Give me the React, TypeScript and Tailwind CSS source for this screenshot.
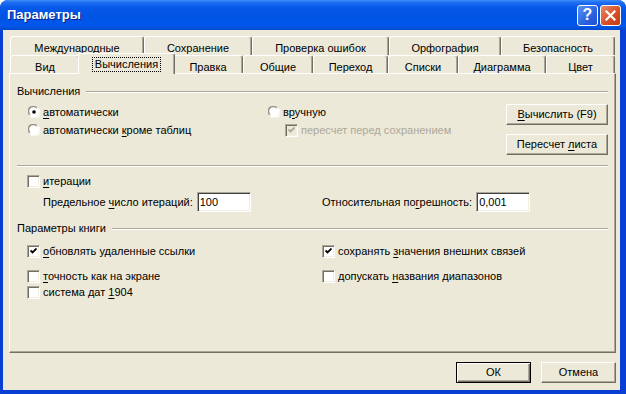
import React from "react";

const face = "bg-[#ECE9D8]";

const Check = ({ checked = false, disabled = false }: { checked?: boolean; disabled?: boolean }) => (
	<div
		className={`flex h-[13px] w-[13px] shrink-0 items-center justify-center border border-t-[#ACA899] border-l-[#ACA899] border-r-white border-b-white shadow-[inset_1px_1px_0_#716F64,inset_-1px_-1px_0_#F1EFE2] ${
			disabled ? face : "bg-white"
		}`}
	>
		{checked && (
			<svg width="7" height="7" viewBox="0 0 7 7">
				<path d="M0.5 2.5 L2.5 4.5 L6.5 0.5" fill="none" stroke={disabled ? "#ACA899" : "#000"} strokeWidth="1.8" />
			</svg>
		)}
	</div>
);

const Radio = ({ checked = false }: { checked?: boolean }) => (
	<svg width="12" height="12" viewBox="0 0 12 12" className="shrink-0">
		<circle cx="6" cy="6" r="5.5" fill="#fff" />
		<path d="M1.2 9.2 A5.5 5.5 0 0 1 9.2 1.2" fill="none" stroke="#ACA899" strokeWidth="1" />
		<path d="M2 8.6 A4.5 4.5 0 0 1 8.6 2" fill="none" stroke="#716F64" strokeWidth="1" />
		<path d="M10.8 2.8 A5.5 5.5 0 0 1 2.8 10.8" fill="none" stroke="#fff" strokeWidth="1" />
		{checked && <circle cx="6" cy="6" r="1.8" fill="#000" />}
	</svg>
);

const GroupHeader = ({ label }: { label: string }) => (
	<div className="flex h-[13px] items-center">
		<span className="leading-[13px]">{label}</span>
		<div className="ml-[6px] flex-1 border-t border-t-[#ACA899] border-b border-b-white" />
	</div>
);

const Btn = ({ children, def = false, className = "" }: { children: React.ReactNode; def?: boolean; className?: string }) => (
	<button
		className={`flex h-[21px] items-center justify-center ${face} ${
			def
				? "border border-black shadow-[inset_1px_1px_0_#fff,inset_-1px_-1px_0_#716F64,inset_-2px_-2px_0_#ACA899]"
				: "border border-t-white border-l-white border-r-[#716F64] border-b-[#716F64] shadow-[inset_-1px_-1px_0_#ACA899]"
		} ${className}`}
	>
		<span>{children}</span>
	</button>
);

const Field = ({ value }: { value: string }) => (
	<div className="flex h-[20px] w-[54px] items-center border border-t-[#ACA899] border-l-[#ACA899] border-r-white border-b-white bg-white pl-[2px] shadow-[inset_1px_1px_0_#404040,inset_-1px_-1px_0_#F1EFE2]">
		{value}
	</div>
);

const U = ({ children }: { children: React.ReactNode }) => <span className="underline underline-offset-[2px]">{children}</span>;

const row1 = [
	{ label: "Международные", w: "w-[134px]" },
	{ label: "Сохранение", w: "w-[108px]" },
	{ label: "Проверка ошибок", w: "w-[137px]" },
	{ label: "Орфография", w: "w-[112px]" },
	{ label: "Безопасность", w: "w-[114px]" },
];

const row2 = [
	{ label: "Вид", w: "w-[70px]" },
	{ label: "Вычисления", w: "w-[97px]", active: true },
	{ label: "Правка", w: "w-[70px]" },
	{ label: "Общие", w: "w-[70px]" },
	{ label: "Переход", w: "w-[75px]" },
	{ label: "Списки", w: "w-[70px]" },
	{ label: "Диаграмма", w: "w-[88px]" },
	{ label: "Цвет", w: "w-[69px]" },
];

const tabBase =
	"flex justify-center border-t border-l border-t-white border-l-white border-r border-r-[#716F64] rounded-t-[3px] shadow-[inset_-1px_0_0_#ACA899]";

export default function App() {
	return (
		<div className="flex h-[394px] w-[626px] flex-col overflow-hidden rounded-t-[8px] bg-[#0A3FD6] font-['Liberation_Sans',Arial,sans-serif] text-[11px] text-black">
			{/* title bar */}
			<div className="flex h-[30px] shrink-0 items-center bg-[linear-gradient(to_bottom,#3D8EFB_0%,#1F6EF3_8%,#0758E8_25%,#0054E3_55%,#0057EC_85%,#004ACC_100%)] pl-[7px] pr-[5px]">
				<span className="flex-1 text-[13px] font-bold text-white [text-shadow:1px_1px_0_#0A1E8C]">Параметры</span>
				<div className="flex gap-[2px]">
					<div className="flex h-[21px] w-[21px] items-center justify-center rounded-[3px] border border-white bg-[linear-gradient(135deg,#5A92F8,#2A62E0_60%,#1E4FCF)] text-[16px] font-bold leading-none text-white">
						?
					</div>
					<div className="flex h-[21px] w-[21px] items-center justify-center rounded-[3px] border border-white bg-[linear-gradient(135deg,#EA8A6A,#D9502A_55%,#C03A14)]">
						<svg width="11" height="11" viewBox="0 0 11 11">
							<path d="M1.5 1.5 L9.5 9.5 M9.5 1.5 L1.5 9.5" stroke="#fff" strokeWidth="2.2" strokeLinecap="square" />
						</svg>
					</div>
				</div>
			</div>

			{/* body */}
			<div className={`mb-[4px] ml-[3px] mr-[6px] flex flex-1 flex-col ${face} pl-[6px] pr-[4px] pt-[6px]`}>
				{/* tabs */}
				<div className="flex h-[19px] pl-px">
					{row1.map((t) => (
						<div key={t.label} className={`${tabBase} ${t.w} h-[19px] items-start pt-[3px]`}>
							{t.label}
						</div>
					))}
				</div>
				<div className="flex h-[18px] pl-px">
					{row2.map((t) =>
						t.active ? (
							<div
								key={t.label}
								className={`${tabBase} ${t.w} ${face} relative z-10 -mx-[2px] -mt-[2px] h-[21px] items-start pt-[4px]`}
							>
								<span className="px-[2px] leading-[13px] outline-1 outline-dotted outline-black">{t.label}</span>
							</div>
						) : (
							<div key={t.label} className={`${tabBase} ${t.w} h-[18px] items-start pt-[3px]`}>
								{t.label}
							</div>
						)
					)}
				</div>

				{/* panel */}
				<div className="flex h-[280px] flex-col border border-t-white border-l-white border-r-[#716F64] border-b-[#716F64] px-[7px] shadow-[inset_-1px_-1px_0_#ACA899]">
					<div className="mt-[11px]">
						<GroupHeader label="Вычисления" />
					</div>

					<div className="mt-[6px] flex h-[51px]">
						<div className="ml-[11px] flex w-[240px] flex-col gap-[2px]">
							<div className="flex h-4 items-center gap-[3px]">
								<Radio checked />
								<span>
									<U>а</U>втоматически
								</span>
							</div>
							<div className="flex h-4 items-center gap-[3px]">
								<Radio />
								<span>
									автоматически <U>к</U>роме таблиц
								</span>
							</div>
						</div>
						<div className="flex flex-1 flex-col gap-[2px]">
							<div className="flex h-4 items-center gap-[3px]">
								<Radio />
								<span>
									в<U>р</U>учную
								</span>
							</div>
							<div className="ml-[17px] flex h-4 items-center gap-[3px]">
								<Check checked disabled />
								<span className="text-[#ACA899]">пересчет перед сохранением</span>
							</div>
						</div>
						<div className="flex w-[102px] flex-col gap-[9px]">
							<Btn>
								<U>В</U>ычислить (F9)
							</Btn>
							<Btn>
								Пересчет <U>л</U>иста
							</Btn>
						</div>
					</div>

					<div className="mt-[10px] border-t border-t-[#ACA899] border-b border-b-white" />

					<div className="ml-[10px] mt-[8px] flex h-[13px] items-center gap-[3px]">
						<Check />
						<span>
							<U>и</U>терации
						</span>
					</div>

					<div className="mt-[4px] flex h-[20px] items-center">
						<div className="ml-[26px] flex w-[279px] items-center gap-[4px]">
							<span>
								Предельное <U>ч</U>исло итераций:
							</span>
							<Field value="100" />
						</div>
						<div className="flex items-center gap-[4px]">
							<span>
								Относительная по<U>г</U>решность:
							</span>
							<Field value="0,001" />
						</div>
					</div>

					<div className="mt-[10px]">
						<GroupHeader label="Параметры книги" />
					</div>

					<div className="ml-[10px] mt-[10px] flex h-[13px]">
						<div className="flex w-[295px] items-center gap-[3px]">
							<Check checked />
							<span>
								<U>о</U>бновлять удаленные ссылки
							</span>
						</div>
						<div className="flex items-center gap-[3px]">
							<Check checked />
							<span>
								сохранять <U>з</U>начения внешних связей
							</span>
						</div>
					</div>
					<div className="ml-[10px] mt-[12px] flex h-[13px]">
						<div className="flex w-[295px] items-center gap-[3px]">
							<Check />
							<span>
								<U>т</U>очность как на экране
							</span>
						</div>
						<div className="flex items-center gap-[3px]">
							<Check />
							<span>
								допускать <U>н</U>азвания диапазонов
							</span>
						</div>
					</div>
					<div className="ml-[10px] mt-[3px] flex h-[13px] items-center gap-[3px]">
						<Check />
						<span>
							система дат <U>1</U>904
						</span>
					</div>
				</div>

				{/* dialog buttons */}
				<div className="mt-[9px] flex justify-end gap-[10px]">
					<Btn def className="w-[75px]">
						ОК
					</Btn>
					<Btn className="w-[75px]">Отмена</Btn>
				</div>
			</div>
		</div>
	);
}
